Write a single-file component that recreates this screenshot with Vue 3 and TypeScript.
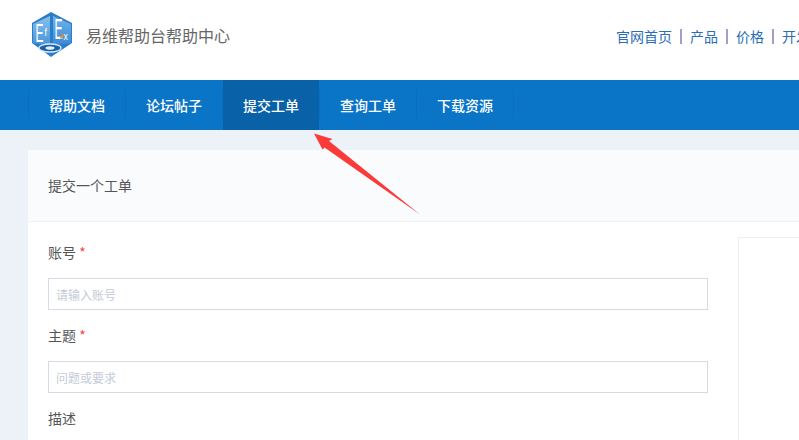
<script setup lang="ts">
const links: string[] = ['官网首页', '产品', '价格', '开发者']
const tabs: string[] = ['帮助文档', '论坛帖子', '提交工单', '查询工单', '下载资源']
</script>

<template>
  <div class="page">
    <header class="top">
      <div class="brand">
        <svg class="logo" width="44" height="48" viewBox="0 0 44 48">
          <defs>
            <linearGradient id="l" x1="0" y1="0" x2="0" y2="1">
              <stop offset="0" stop-color="#86c1ee" />
              <stop offset="1" stop-color="#4a94d9" />
            </linearGradient>
            <linearGradient id="r" x1="0" y1="0" x2="0" y2="1">
              <stop offset="0" stop-color="#6cb4ea" />
              <stop offset="1" stop-color="#3c8ad4" />
            </linearGradient>
          </defs>
          <polygon points="21,1 42,12 42,32 21,46 2,32 2,12" fill="#2c7cc8" />
          <polygon points="3,13 20,5 20,34 3,32" fill="url(#l)" />
          <polygon points="23,5 41,13 41,32 23,34" fill="url(#r)" />
          <ellipse cx="20" cy="37" rx="11" ry="4" fill="#1f5fa8" stroke="#d6eafa" stroke-width="1.3" />
          <ellipse cx="20" cy="37" rx="4.5" ry="1.8" fill="#e3f1fb" />
          <text transform="translate(5.5 31) scale(.48 1)" class="e1">E</text>
          <text transform="translate(14.5 25) scale(.8 1)" class="x1">f</text>
          <text transform="translate(24.5 28) scale(.42 1)" class="e2">E</text>
          <text transform="translate(33.5 29) scale(.8 1)" class="x2">x</text>
          <path d="M30.5 27.5 L33.5 23" stroke="#ef8a2c" stroke-width="1.8" />
        </svg>
        <span class="title">易维帮助台帮助中心</span>
      </div>
      <nav class="links">
        <template v-for="(l, i) in links" :key="l">
          <i v-if="i" class="sep"></i>
          <a class="link">{{ l }}</a>
        </template>
      </nav>
    </header>

    <nav class="tabs">
      <a v-for="(t, i) in tabs" :key="t" class="tab" :class="{ active: i === 2 }">{{ t }}</a>
    </nav>

    <main class="main">
      <section class="card">
        <div class="card-head">提交一个工单</div>
        <div class="card-body">
          <form class="form">
            <label class="label">账号 <em>*</em></label>
            <input class="input" placeholder="请输入账号" />
            <label class="label">主题 <em>*</em></label>
            <input class="input" placeholder="问题或要求" />
            <label class="label">描述</label>
          </form>
          <aside class="side"></aside>
        </div>
      </section>
    </main>

    <svg class="arrow" width="120" height="90" viewBox="310 130 120 90">
      <polygon points="314,133.5 332.5,139 329,141 420,214.5 324.5,147.5 322.5,149.5" fill="#fb3a3a" />
    </svg>
  </div>
</template>

<style>
html, body { margin: 0; overflow: hidden; }
</style>

<style scoped>
.page {
  position: relative;
  width: 799px;
  height: 440px;
  overflow: hidden;
  background: #edf2f9;
  font-family: "Noto Sans CJK SC", "Noto Sans", sans-serif;
  color: #555;
}
.top {
  height: 80px;
  background: #fff;
  display: flex;
  justify-content: space-between;
  box-sizing: border-box;
  padding-left: 30px;
}
.brand { display: flex; align-items: flex-start; padding-top: 11px; }
.logo { flex: none; }
.title {
  margin: 13px 0 0 12px;
  font-size: 16px;
  line-height: 22px;
  color: #666;
}
.e1, .e2, .x1, .x2 { font-family: "Liberation Sans", sans-serif; fill: #fff; }
.e1 { font-size: 25px; }
.e2 { font-size: 29px; }
.x1 { font-size: 11px; }
.x2 { font-size: 11px; }
.links {
  display: flex;
  align-items: center;
  flex: none;
  gap: 8px;
  margin-right: -25px;
  height: 20px;
  margin-top: 26px;
  white-space: nowrap;
}
.link { font-size: 14px; line-height: 20px; color: #2a6db5; }
.sep { width: 2px; height: 15px; background: #a89cc8; }
.tabs {
  height: 50px;
  background: #0a75c7;
  display: flex;
  padding-left: 29px;
}
.tab {
  position: relative;
  width: 96px;
  margin-right: 1px;
  text-align: center;
  font-size: 14px;
  font-weight: 500;
  line-height: 50px;
  color: #fff;
}
.tab::after,
.tab:first-child::before {
  content: "";
  position: absolute;
  top: 9px;
  height: 30px;
  width: 1px;
  background: rgba(0, 40, 90, 0.08);
}
.tab::after { right: -1px; }
.tab:first-child::before { left: -1px; }
.tab.active { background: #0962a8; }
.main { padding: 20px 0 0 28px; }
.card { width: 900px; height: 400px; background: #fff; }
.card-head {
  height: 72px;
  box-sizing: border-box;
  padding-left: 20px;
  line-height: 71px;
  font-size: 14px;
  background: #fafbfd;
  border-bottom: 1px solid #f0f1f3;
}
.card-body { display: flex; padding: 15px 0 0 20px; }
.form { width: 660px; flex: none; display: flex; flex-direction: column; padding-top: 5px; }
.label {
  font-size: 14px;
  line-height: 20px;
  height: 20px;
  margin-bottom: 16px;
  color: #555;
}
.label em { color: #f44; font-style: normal; }
.input {
  box-sizing: border-box;
  width: 660px;
  height: 32px;
  padding: 0 7px;
  margin-bottom: 15px;
  border: 1px solid #d5dbe4;
  background: #fff;
  outline: none;
  font: 12px "Noto Sans CJK SC", sans-serif;
}
.input::placeholder { color: #c4cbd6; opacity: 1; }
.side {
  width: 200px;
  height: 300px;
  margin-left: 30px;
  box-sizing: border-box;
  border: 1px solid #eee;
}
.arrow { position: absolute; left: 310px; top: 130px; }
</style>
